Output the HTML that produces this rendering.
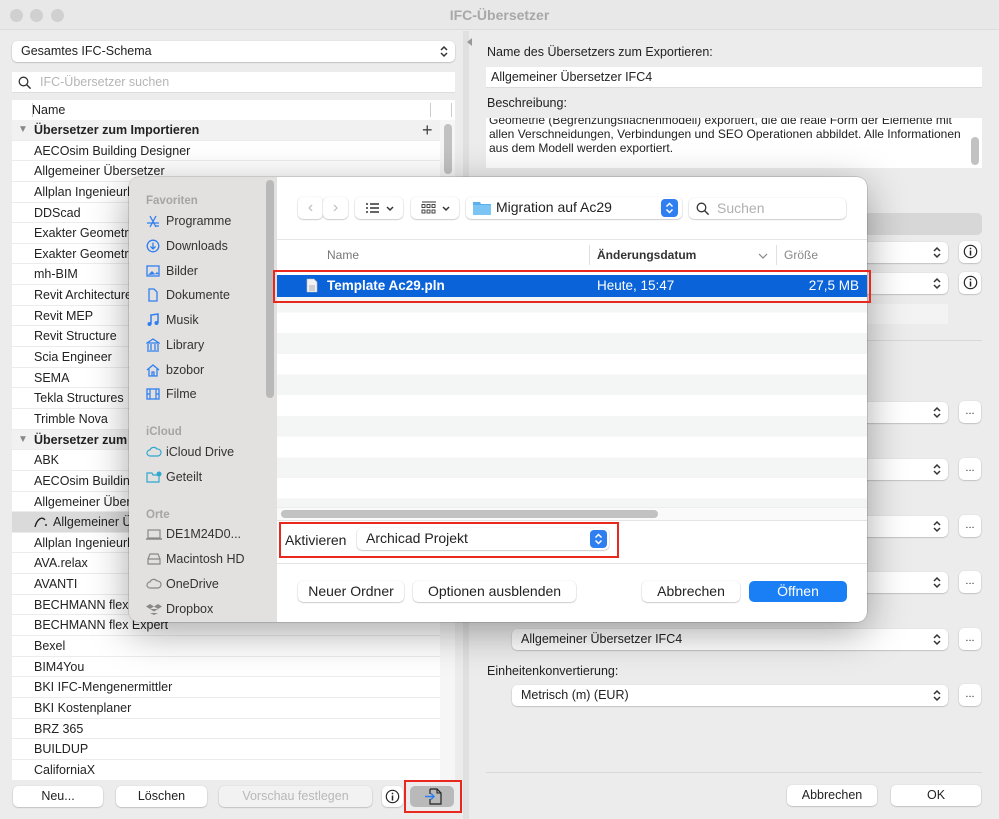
<!DOCTYPE html>
<html><head><meta charset="utf-8"><style>
*{box-sizing:border-box;margin:0;padding:0}
body{width:999px;height:819px;overflow:hidden;background:#ececec;font-family:"Liberation Sans",sans-serif;font-size:12.5px;color:#222;position:relative}
.a{position:absolute}
.title{left:0;top:0;width:999px;height:30px;text-align:center;line-height:30px;font-weight:bold;font-size:14px;color:#a8a8a8;border-bottom:1px solid #dcdcdc;background:#e8e8e8}
.dot{top:9px;width:13px;height:13px;border-radius:50%;background:#d0d0d0}
.pop{background:#fff;border-radius:5px;box-shadow:0 0.5px 1.5px rgba(0,0,0,.3);height:21px;line-height:21px;padding-left:9px;font-size:12.5px}
.chev{position:absolute;right:6px;top:3px;width:10px;height:15px}
.btn{background:#fff;border-radius:5px;box-shadow:0 0.5px 1.5px rgba(0,0,0,.3);text-align:center;height:21px;line-height:21px;font-size:12.5px}
.list{left:12px;top:120px;width:428px}
.row{height:20.65px;line-height:20.65px;background:#fff;border-bottom:1px solid #ececec;padding-left:22px;white-space:nowrap;overflow:hidden}
.row.h{background:#f1f1f1;font-weight:bold;padding-left:22px}
.row.sel{background:#dadada}
.side{left:129px;top:177px;width:148px;height:445px;background:#e3e1df;border-radius:10px 0 0 10px}
.si{position:absolute;left:17px;font-size:12.5px;color:#333;height:20px;line-height:20px;white-space:nowrap}
.si svg{position:absolute;left:0;top:3px}
.si span{margin-left:20px}
.sh{position:absolute;left:17px;font-size:11.5px;color:#a5a5a5;font-weight:bold}
.dbtn{position:absolute;background:#fff;border-radius:5px;box-shadow:0 0.5px 1.5px rgba(0,0,0,.35);height:21px;line-height:21px;text-align:center;font-size:14px;color:#222}
.sq{background:#fff;border-radius:5px;box-shadow:0 0.5px 1.5px rgba(0,0,0,.3);width:22px;height:22px;text-align:center;line-height:20px;font-size:11px;color:#333}
</style></head><body>
<div class="a title">IFC-Übersetzer</div>
<div class="a dot" style="left:10px"></div><div class="a dot" style="left:30px"></div><div class="a dot" style="left:51px"></div>

<div class="a pop" style="left:12px;top:41px;width:443px">Gesamtes IFC-Schema<svg class="chev" viewBox="0 0 10 15"><path d="M2 6l3-3 3 3M2 9l3 3 3-3" fill="none" stroke="#333" stroke-width="1.5"/></svg></div>
<div class="a" style="left:12px;top:72px;width:443px;height:21px;background:#fff;border-bottom:1px solid #ddd;line-height:21px;padding-left:28px;color:#b5b5b5">IFC-Übersetzer suchen
<svg class="a" style="left:6px;top:4px" width="14" height="14" viewBox="0 0 14 14"><circle cx="5.5" cy="5.5" r="4.3" fill="none" stroke="#333" stroke-width="1.3"/><path d="M8.6 8.6l4 4" stroke="#333" stroke-width="1.4"/></svg></div>
<div class="a" style="left:12px;top:100px;width:443px;height:20px;background:#fff;line-height:20px;padding-left:20px">Name<div class="a" style="left:20px;top:3px;width:1px;height:14px;background:#ccc"></div><div class="a" style="left:418px;top:3px;width:1px;height:14px;background:#ccc"></div><div class="a" style="left:439px;top:3px;width:1px;height:14px;background:#ccc"></div></div>
<div class="a list">
<div class="row h"><span class="a" style="left:6px;color:#888;font-size:10px">▼</span>Übersetzer zum Importieren<span class="a" style="left:410px;font-weight:normal;font-size:18px;color:#444">+</span></div>
<div class="row">AECOsim Building Designer</div>
<div class="row">Allgemeiner Übersetzer</div>
<div class="row">Allplan Ingenieurbau</div>
<div class="row">DDScad</div>
<div class="row">Exakter Geometrie</div>
<div class="row">Exakter Geometrie</div>
<div class="row">mh-BIM</div>
<div class="row">Revit Architecture</div>
<div class="row">Revit MEP</div>
<div class="row">Revit Structure</div>
<div class="row">Scia Engineer</div>
<div class="row">SEMA</div>
<div class="row">Tekla Structures</div>
<div class="row">Trimble Nova</div>
<div class="row h"><span class="a" style="left:6px;color:#888;font-size:10px">▼</span>Übersetzer zum Exportieren</div>
<div class="row">ABK</div>
<div class="row">AECOsim Building Designer</div>
<div class="row">Allgemeiner Übersetzer</div>
<div class="row sel"><svg class="a" style="left:22px;margin-top:4px" width="14" height="12" viewBox="0 0 14 12"><path d="M1 11C3 3 8 0 11 4M12 8v2" fill="none" stroke="#222" stroke-width="1.4"/></svg><span style="margin-left:19px">Allgemeiner Übersetzer IFC4</span></div>
<div class="row">Allplan Ingenieurbau</div>
<div class="row">AVA.relax</div>
<div class="row">AVANTI</div>
<div class="row">BECHMANN flex BIM</div>
<div class="row">BECHMANN flex Expert</div>
<div class="row">Bexel</div>
<div class="row">BIM4You</div>
<div class="row">BKI IFC-Mengenermittler</div>
<div class="row">BKI Kostenplaner</div>
<div class="row">BRZ 365</div>
<div class="row">BUILDUP</div>
<div class="row">CaliforniaX</div>
</div>
<div class="a" style="left:440px;top:120px;width:15px;height:661px;background:#f6f6f6"></div>
<div class="a" style="left:444px;top:124px;width:8px;height:50px;border-radius:4px;background:#c2c2c2"></div>

<div class="a btn" style="left:13px;top:786px;width:90px">Neu...</div>
<div class="a btn" style="left:116px;top:786px;width:91px">Löschen</div>
<div class="a btn" style="left:219px;top:786px;width:153px;color:#b8b8b8;background:#f2f2f2">Vorschau festlegen</div>
<div class="a sq" style="left:382px;top:786px;width:21px;height:21px"><svg width="15" height="15" viewBox="0 0 15 15" style="margin-top:3px"><circle cx="7.5" cy="7.5" r="6.2" fill="none" stroke="#222" stroke-width="1.2"/><path d="M7.5 6.5v5M7.5 3.8v1.4" stroke="#222" stroke-width="1.5"/></svg></div>
<div class="a" style="left:410px;top:786px;width:44px;height:21px;border-radius:5px;background:#b9b9b9"><svg class="a" style="left:14px;top:2px" width="18" height="17" viewBox="0 0 18 17"><path d="M6 1h7l4 4v11H6V11M6 6V1" fill="none" stroke="#222" stroke-width="1.2"/><path d="M13 1v4h4" fill="none" stroke="#222" stroke-width="1.1"/><path d="M1 8.5h9M7 5.5l3 3-3 3" fill="none" stroke="#2f7ff0" stroke-width="1.5"/></svg></div>
<div class="a" style="left:404px;top:780px;width:58px;height:33px;border:2px solid #e8281e"></div>

<div class="a" style="left:463px;top:31px;width:6px;height:788px;background:#e0e0e0"></div>
<div class="a" style="left:467px;top:38px;width:0;height:0;border-right:5px solid #999;border-top:4px solid transparent;border-bottom:4px solid transparent"></div>

<div class="a" style="left:487px;top:45px;font-size:12.5px">Name des Übersetzers zum Exportieren:</div>
<div class="a" style="left:486px;top:67px;width:496px;height:21px;background:#fff;line-height:21px;padding-left:5px;border-bottom:1px solid #ddd">Allgemeiner Übersetzer IFC4</div>
<div class="a" style="left:487px;top:96px">Beschreibung:</div>
<div class="a" style="left:486px;top:118px;width:496px;height:50px;background:#fff;font-size:12px;line-height:13.8px;padding:0 10px 0 3px;overflow:hidden"><div style="margin-top:-4px">Geometrie (Begrenzungsflächenmodell) exportiert, die die reale Form der Elemente mit allen Verschneidungen, Verbindungen und SEO Operationen abbildet. Alle Informationen aus dem Modell werden exportiert.</div></div>
<div class="a" style="left:971px;top:137px;width:8px;height:28px;border-radius:4px;background:#c2c2c2"></div>
<div class="a" style="left:486px;top:213px;width:496px;height:22px;border-radius:5px;background:#d7d7d7"></div>
<div class="a pop" style="left:512px;top:242px;width:436px"><svg class="chev" viewBox="0 0 10 15"><path d="M2 6l3-3 3 3M2 9l3 3 3-3" fill="none" stroke="#333" stroke-width="1.5"/></svg></div>
<div class="a pop" style="left:512px;top:273px;width:436px"><svg class="chev" viewBox="0 0 10 15"><path d="M2 6l3-3 3 3M2 9l3 3 3-3" fill="none" stroke="#333" stroke-width="1.5"/></svg></div>
<div class="a sq" style="left:959px;top:241px"><svg width="15" height="15" viewBox="0 0 15 15" style="margin-top:3px"><circle cx="7.5" cy="7.5" r="6.2" fill="none" stroke="#222" stroke-width="1.2"/><path d="M7.5 6.5v5M7.5 3.8v1.4" stroke="#222" stroke-width="1.5"/></svg></div>
<div class="a sq" style="left:959px;top:272px"><svg width="15" height="15" viewBox="0 0 15 15" style="margin-top:3px"><circle cx="7.5" cy="7.5" r="6.2" fill="none" stroke="#222" stroke-width="1.2"/><path d="M7.5 6.5v5M7.5 3.8v1.4" stroke="#222" stroke-width="1.5"/></svg></div>
<div class="a" style="left:512px;top:304px;width:436px;height:20px;background:#f3f3f3"></div>
<div class="a" style="left:486px;top:340px;width:496px;height:1px;background:#d8d8d8"></div>
<div class="a pop" style="left:512px;top:402px;width:436px"><svg class="chev" viewBox="0 0 10 15"><path d="M2 6l3-3 3 3M2 9l3 3 3-3" fill="none" stroke="#333" stroke-width="1.5"/></svg></div>
<div class="a sq" style="left:959px;top:401px">...</div>
<div class="a pop" style="left:512px;top:459px;width:436px"><svg class="chev" viewBox="0 0 10 15"><path d="M2 6l3-3 3 3M2 9l3 3 3-3" fill="none" stroke="#333" stroke-width="1.5"/></svg></div>
<div class="a sq" style="left:959px;top:458px">...</div>
<div class="a pop" style="left:512px;top:516px;width:436px"><svg class="chev" viewBox="0 0 10 15"><path d="M2 6l3-3 3 3M2 9l3 3 3-3" fill="none" stroke="#333" stroke-width="1.5"/></svg></div>
<div class="a sq" style="left:959px;top:515px">...</div>
<div class="a pop" style="left:512px;top:572px;width:436px"><svg class="chev" viewBox="0 0 10 15"><path d="M2 6l3-3 3 3M2 9l3 3 3-3" fill="none" stroke="#333" stroke-width="1.5"/></svg></div>
<div class="a sq" style="left:959px;top:571px">...</div>
<div class="a pop" style="left:512px;top:629px;width:436px">Allgemeiner Übersetzer IFC4<svg class="chev" viewBox="0 0 10 15"><path d="M2 6l3-3 3 3M2 9l3 3 3-3" fill="none" stroke="#333" stroke-width="1.5"/></svg></div>
<div class="a sq" style="left:959px;top:628px">...</div>
<div class="a" style="left:487px;top:664px">Einheitenkonvertierung:</div>
<div class="a pop" style="left:512px;top:685px;width:436px">Metrisch (m) (EUR)<svg class="chev" viewBox="0 0 10 15"><path d="M2 6l3-3 3 3M2 9l3 3 3-3" fill="none" stroke="#333" stroke-width="1.5"/></svg></div>
<div class="a sq" style="left:959px;top:684px">...</div>
<div class="a" style="left:486px;top:772px;width:496px;height:1px;background:#d8d8d8"></div>
<div class="a btn" style="left:787px;top:785px;width:90px">Abbrechen</div>
<div class="a btn" style="left:891px;top:785px;width:90px">OK</div>

<div class="a" style="left:129px;top:177px;width:738px;height:445px;border-radius:10px;background:#fff;box-shadow:0 10px 40px rgba(0,0,0,.35),0 0 0 0.5px rgba(0,0,0,.25)"></div>
<div class="a side">
<div class="a" style="left:137px;top:3px;width:8px;height:218px;border-radius:4px;background:#b9b9b9"></div>
<div class="sh" style="top:18px">Favoriten</div>
<div class="si" style="top:34px"><svg width="14" height="14" viewBox="0 0 14 14"><path d="M4 2l6 11M10 2L4 13M1 9h12M9 12h4" stroke="#2f7ff0" stroke-width="1.3" fill="none"/></svg><span>Programme</span></div>
<div class="si" style="top:59px"><svg width="14" height="14" viewBox="0 0 14 14"><circle cx="7" cy="7" r="5.8" fill="none" stroke="#2f7ff0" stroke-width="1.3"/><path d="M7 3.5v6M4.5 7.5L7 10l2.5-2.5" fill="none" stroke="#2f7ff0" stroke-width="1.3"/></svg><span>Downloads</span></div>
<div class="si" style="top:84px"><svg width="14" height="14" viewBox="0 0 14 14"><rect x="1" y="2" width="12" height="10" fill="none" stroke="#2f7ff0" stroke-width="1.3"/><path d="M2 11l4-4 3 3 2-2 2 2" fill="#2f7ff0"/></svg><span>Bilder</span></div>
<div class="si" style="top:108px"><svg width="14" height="14" viewBox="0 0 14 14"><path d="M3 1h5l3 3v9H3z" fill="none" stroke="#2f7ff0" stroke-width="1.3"/></svg><span>Dokumente</span></div>
<div class="si" style="top:133px"><svg width="14" height="14" viewBox="0 0 14 14"><path d="M5 11V2l7-1v9" fill="none" stroke="#2f7ff0" stroke-width="1.5"/><circle cx="3.5" cy="11" r="2" fill="#2f7ff0"/><circle cx="10.5" cy="10" r="2" fill="#2f7ff0"/></svg><span>Musik</span></div>
<div class="si" style="top:158px"><svg width="14" height="14" viewBox="0 0 14 14"><path d="M1 5L7 1l6 4zM2 6v6M5 6v6M9 6v6M12 6v6M1 13h12" fill="none" stroke="#2f7ff0" stroke-width="1.3"/></svg><span>Library</span></div>
<div class="si" style="top:183px"><svg width="14" height="14" viewBox="0 0 14 14"><path d="M1 7l6-5 6 5M3 6v7h8V6M6 13V9h2v4" fill="none" stroke="#2f7ff0" stroke-width="1.3"/></svg><span>bzobor</span></div>
<div class="si" style="top:207px"><svg width="14" height="14" viewBox="0 0 14 14"><rect x="1" y="2" width="12" height="10" fill="none" stroke="#2f7ff0" stroke-width="1.3"/><path d="M4 2v10M10 2v10M1 7h3M10 7h3" stroke="#2f7ff0" stroke-width="1.2"/></svg><span>Filme</span></div>
<div class="sh" style="top:249px">iCloud</div>
<div class="si" style="top:265px"><svg width="16" height="14" viewBox="0 0 16 14"><path d="M4 11a3 3 0 010-6 4 4 0 017-1 3 3 0 011 7z" fill="none" stroke="#2fa8d0" stroke-width="1.2"/></svg><span>iCloud Drive</span></div>
<div class="si" style="top:290px"><svg width="16" height="14" viewBox="0 0 16 14"><path d="M1 3h5l1 2h6v7H1z" fill="none" stroke="#2fa8d0" stroke-width="1.2"/><circle cx="13" cy="4" r="2.5" fill="#2fa8d0"/></svg><span>Geteilt</span></div>
<div class="sh" style="top:332px">Orte</div>
<div class="si" style="top:347px"><svg width="16" height="14" viewBox="0 0 16 14"><rect x="2" y="3" width="12" height="8" fill="none" stroke="#888" stroke-width="1.2"/><path d="M0 12h16" stroke="#888" stroke-width="1.5"/></svg><span>DE1M24D0...</span></div>
<div class="si" style="top:372px"><svg width="16" height="14" viewBox="0 0 16 14"><path d="M2 7l2-5h8l2 5v5H2zM2 7h12" fill="none" stroke="#888" stroke-width="1.2"/></svg><span>Macintosh HD</span></div>
<div class="si" style="top:397px"><svg width="16" height="14" viewBox="0 0 16 14"><path d="M4 11a3 3 0 010-6 4 4 0 017-1 3 3 0 011 7z" fill="none" stroke="#888" stroke-width="1.2"/></svg><span>OneDrive</span></div>
<div class="si" style="top:422px"><svg width="16" height="14" viewBox="0 0 16 14"><path d="M4 2l4 2.5-4 2.5-4-2.5zM12 2l4 2.5-4 2.5-4-2.5zM4 7l4 2.5 4-2.5M4 11l4 2 4-2" fill="#888"/></svg><span>Dropbox</span></div>
</div>

<div class="a dbtn" style="left:298px;top:197px;width:25px;height:22px;color:#bbb;font-size:16px">&#8249;</div>
<div class="a dbtn" style="left:323px;top:197px;width:25px;height:22px;color:#bbb;font-size:16px">&#8250;</div>
<div class="a dbtn" style="left:355px;top:197px;width:48px;height:22px"><svg class="a" style="left:10px;top:5px" width="30" height="12" viewBox="0 0 30 12"><path d="M1 2h2M1 6h2M1 10h2M5 2h9M5 6h9M5 10h9" stroke="#333" stroke-width="1.4"/><path d="M22 5l3 3 3-3" fill="none" stroke="#333" stroke-width="1.5"/></svg></div>
<div class="a dbtn" style="left:411px;top:197px;width:48px;height:22px"><svg class="a" style="left:10px;top:4px" width="30" height="14" viewBox="0 0 30 14"><path d="M1 1h14" stroke="#333"/><rect x="1" y="3.5" width="3" height="3" fill="none" stroke="#333" stroke-width=".9"/><rect x="6" y="3.5" width="3" height="3" fill="none" stroke="#333" stroke-width=".9"/><rect x="11" y="3.5" width="3" height="3" fill="none" stroke="#333" stroke-width=".9"/><rect x="1" y="9" width="3" height="3" fill="none" stroke="#333" stroke-width=".9"/><rect x="6" y="9" width="3" height="3" fill="none" stroke="#333" stroke-width=".9"/><rect x="11" y="9" width="3" height="3" fill="none" stroke="#333" stroke-width=".9"/><path d="M22 6l3 3 3-3" fill="none" stroke="#333" stroke-width="1.5"/></svg></div>
<div class="a dbtn" style="left:466px;top:197px;width:216px;height:22px;text-align:left;padding-left:30px">Migration auf Ac29
<svg class="a" style="left:7px;top:4px" width="18" height="14" viewBox="0 0 18 14"><path d="M0 1h7l1 2h10v11H0z" fill="#5ab0ec"/><path d="M0 4h18v10H0z" fill="#7cc4f4"/></svg>
<div class="a" style="left:195px;top:2px;width:17px;height:18px;border-radius:4px;background:#2f7ff0"><svg width="17" height="18" viewBox="0 0 17 18"><path d="M5.5 7.5l3-3 3 3M5.5 10.5l3 3 3-3" fill="none" stroke="#fff" stroke-width="1.5"/></svg></div></div>
<div class="a dbtn" style="left:689px;top:198px;width:157px;height:21px;text-align:left;padding-left:28px;color:#b0b0b0">Suchen
<svg class="a" style="left:7px;top:4px" width="14" height="14" viewBox="0 0 14 14"><circle cx="5.5" cy="5.5" r="4.3" fill="none" stroke="#333" stroke-width="1.3"/><path d="M8.6 8.6l4 4" stroke="#333" stroke-width="1.4"/></svg></div>
<div class="a" style="left:277px;top:239px;width:590px;height:1px;background:#e6e6e6"></div>
<div class="a" style="left:327px;top:248px;color:#777;font-size:12px">Name</div>
<div class="a" style="left:589px;top:245px;width:1px;height:20px;background:#e0e0e0"></div>
<div class="a" style="left:597px;top:248px;color:#333;font-size:12px;font-weight:bold">Änderungsdatum</div>
<svg class="a" style="left:758px;top:252px" width="10" height="8" viewBox="0 0 10 8"><path d="M1 2l4 4 4-4" fill="none" stroke="#888" stroke-width="1.2"/></svg>
<div class="a" style="left:776px;top:245px;width:1px;height:20px;background:#e0e0e0"></div>
<div class="a" style="left:784px;top:248px;color:#888;font-size:12px">Größe</div>
<div class="a" style="left:277px;top:271px;width:590px;height:236px;background:repeating-linear-gradient(#fff 0,#fff 20.7px,#f4f5f5 20.7px,#f4f5f5 41.4px)"></div>
<div class="a" style="left:277px;top:275px;width:590px;height:22px;background:#0a63d8;color:#fff;font-size:13.5px;line-height:22px">
<svg class="a" style="left:29px;top:3px" width="12" height="15" viewBox="0 0 12 15"><path d="M1 1h7l3 3v10H1z" fill="#f2f2f2" stroke="#bbb" stroke-width=".6"/><path d="M3 8h6M3 10h6M3 12h6" stroke="#999" stroke-width=".7"/></svg>
<span class="a" style="left:50px;font-weight:bold">Template Ac29.pln</span><span class="a" style="left:320px">Heute, 15:47</span><span class="a" style="right:8px">27,5 MB</span></div>
<div class="a" style="left:273px;top:270px;width:598px;height:33px;border:2px solid #e8281e"></div>
<div class="a" style="left:277px;top:507px;width:590px;height:14px;background:#fafafa;border-top:1px solid #eee;border-bottom:1px solid #e4e4e4"></div>
<div class="a" style="left:281px;top:510px;width:377px;height:8px;border-radius:4px;background:#c2c2c2"></div>
<div class="a" style="left:285px;top:532px;font-size:14px">Aktivieren</div>
<div class="a dbtn" style="left:357px;top:528px;width:252px;height:22px;text-align:left;padding-left:9px">Archicad Projekt
<div class="a" style="left:233px;top:2px;width:17px;height:18px;border-radius:4px;background:#2f7ff0"><svg width="17" height="18" viewBox="0 0 17 18"><path d="M5.5 7.5l3-3 3 3M5.5 10.5l3 3 3-3" fill="none" stroke="#fff" stroke-width="1.5"/></svg></div></div>
<div class="a" style="left:279px;top:522px;width:340px;height:36px;border:2px solid #e8281e"></div>
<div class="a" style="left:277px;top:563px;width:590px;height:1px;background:#e4e4e4"></div>
<div class="a dbtn" style="left:298px;top:581px;width:106px">Neuer Ordner</div>
<div class="a dbtn" style="left:413px;top:581px;width:163px">Optionen ausblenden</div>
<div class="a dbtn" style="left:642px;top:581px;width:98px">Abbrechen</div>
<div class="a dbtn" style="left:749px;top:581px;width:98px;background:#1a7ff5;color:#fff;box-shadow:none">Öffnen</div>
</body></html>
